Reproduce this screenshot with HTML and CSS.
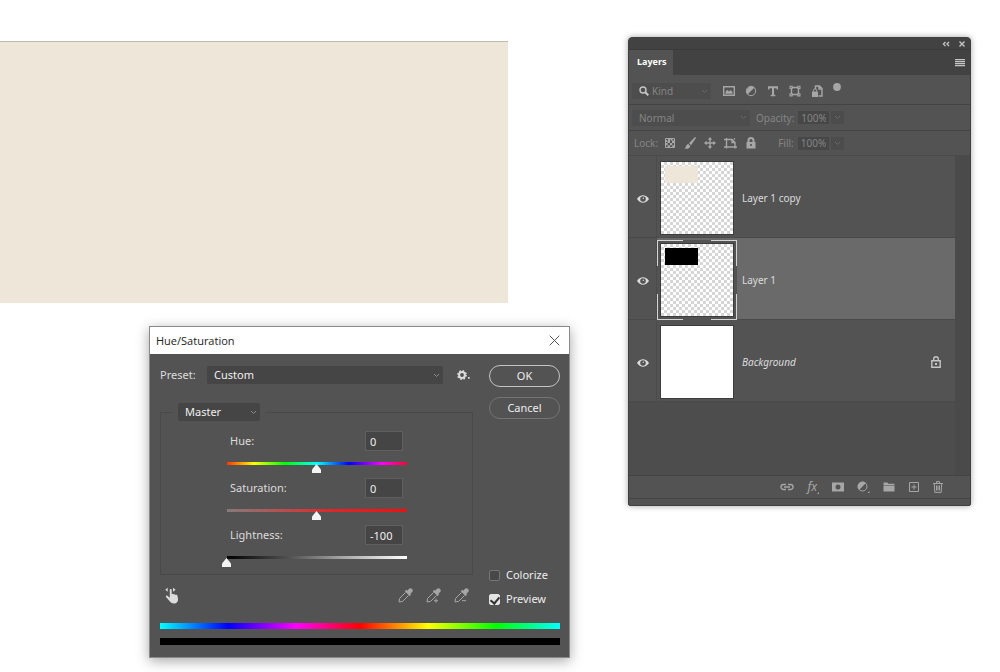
FILE: index.html
```html
<!DOCTYPE html>
<html lang="en">
<head>
<meta charset="utf-8">
<title>Hue/Saturation</title>
<link rel="stylesheet" href="styles.css">
</head>
<body>
<main class="desktop">
  <div class="canvas"></div>

  <section class="window layers" aria-label="Layers">
    <header class="panel-top">
      <button class="icon-btn" aria-label="Collapse"><svg width="8" height="6" viewBox="0 0 8 6"><path class="line light bold" d="M3.500 1l-2 2 2 2M7 1L5 3l2 2"/></svg></button>
      <button class="icon-btn" aria-label="Close panel"><svg width="8" height="8" viewBox="0 0 8 8"><path class="line light bold" d="M1.500 1.500l5 5M6.500 1.500l-5 5"/></svg></button>
    </header>
    <nav class="tabs">
      <button class="tab">Layers</button>
      <button class="icon-btn" aria-label="Panel menu"><svg width="10" height="8" viewBox="0 0 10 8"><path class="fill light" d="M0 0h10v1.300H0zM0 2h10v1.300H0zM0 4h10v1.300H0zM0 6h10v1.300H0z"/></svg></button>
    </nav>

    <div class="row filter">
      <label class="pick kind">
        <svg class="glass" width="10" height="10" viewBox="0 0 10 10"><circle class="line light bold" cx="4" cy="4" r="3"/><path class="line light thick" d="M6 6l3.300 3.300"/></svg>
        <select aria-label="Filter kind"><option>Kind</option></select>
        <svg class="chev" width="7" height="5" viewBox="0 0 7 5"><path class="line" d="M1 1l2.500 2.500L6 1"/></svg>
      </label>
      <div class="filter-icons">
        <button class="icon-btn" aria-label="Pixel layers"><svg width="12" height="12" viewBox="0 0 12 12"><path class="line bold" d="M.7 1.700h10.600v8.600H.7z"/><path class="fill" d="M2.500 8.800V7l1.800-2.300L6 6.500 7.500 5l2 2v1.800z"/></svg></button>
        <button class="icon-btn" aria-label="Adjustment layers"><svg width="12" height="12" viewBox="0 0 12 12"><circle class="line" cx="6" cy="6" r="4.700"/><path class="fill" d="M9.500 2.500A5 5 0 0 0 2.500 9.500z"/></svg></button>
        <button class="icon-btn" aria-label="Type layers"><svg width="12" height="12" viewBox="0 0 12 12"><path class="line thick" d="M1.500 2.200h9M6 2v8"/><path class="line bold" d="M1.700 1.500v3M10.300 1.500v3M3.700 10.500h4.600"/></svg></button>
        <button class="icon-btn" aria-label="Shape layers"><svg width="12" height="12" viewBox="0 0 12 12"><path class="line bold" d="M2.500 2.500h7v7h-7z"/><path class="fill" d="M.5.8h3.200V4H.5zM8.300.8h3.200V4H8.300zM.5 8.200h3.200v3.200H.5zM8.300 8.200h3.200v3.200H8.300z"/><path class="dark" d="M1.500 1.800h1v1h-1zM9.500 1.800h1v1h-1zM1.500 9.200h1v1h-1zM9.500 9.200h1v1h-1z"/></svg></button>
        <button class="icon-btn" aria-label="Smart objects"><svg width="12" height="12" viewBox="0 0 12 12"><path class="line bold" d="M4.500 4V1h4l2.500 2.500V11H7.500M8 1v3h3"/><path class="fill" d="M1 6.500h6V12H1z"/><path class="line" d="M2.500 6.500V5.300a1.500 1.500 0 0 1 3 0v1.200"/></svg></button>
        <button class="icon-btn" aria-label="Toggle filter"><svg width="8" height="16" viewBox="0 0 8 16"><circle class="fill" cx="4" cy="4" r="3.900"/></svg></button>
      </div>
    </div>

    <div class="row blend">
      <label class="pick mode">
        <select aria-label="Blend mode"><option>Normal</option></select>
        <svg class="chev" width="7" height="5" viewBox="0 0 7 5"><path class="line" d="M1 1l2.500 2.500L6 1"/></svg>
      </label>
      <label class="dim" for="opacity">Opacity:</label>
      <input class="pct" id="opacity" type="text" value="100%">
      <button class="drop" aria-label="Opacity slider"><svg width="7" height="5" viewBox="0 0 7 5"><path class="line" d="M1 1l2.500 2.500L6 1"/></svg></button>
    </div>

    <div class="row lock">
      <span class="dim">Lock:</span>
      <div class="lock-icons">
        <button class="icon-btn" aria-label="Lock transparent pixels"><svg width="12" height="12" viewBox="0 0 12 12"><path class="line" d="M1.500 1.500h9v9h-9z"/><path class="fill" d="M4 1h2v2.500H4zM8 3.500h2.500V6H8zM3.500 3.500H6V6H3.500zM6 6h2.300v2.300H6zM1.500 6h2.200v2.300H1.500zM3.700 8.300H6v2.200H3.700zM8.300 8.300h2.200v2.200H8.300zM6.500 1.500h2v2h-2zM1 3h2v2H1z"/></svg></button>
        <button class="icon-btn" aria-label="Lock image pixels"><svg width="12" height="12" viewBox="0 0 12 12"><path class="fill" d="M11.600.2c.5.4.3.900 0 1.300L7 8.200 5 6.300 10.500.6c.4-.4.700-.7 1.100-.4zM4.300 6.900l2 2c-.2 2.200-2.400 3.300-6 2.700C2 10.800 1.800 7.500 4.300 6.900z"/></svg></button>
        <button class="icon-btn" aria-label="Lock position"><svg width="12" height="12" viewBox="0 0 12 12"><path class="line bold" d="M6 1v10M1 6h10"/><path class="fill" d="M6 0l2.200 2.700H3.800zM6 12l2.200-2.700H3.800zM0 6l2.700-2.200v4.400zM12 6L9.300 3.800v4.400z"/></svg></button>
        <button class="icon-btn" aria-label="Lock artboard nesting"><svg width="13" height="12" viewBox="0 0 13 12"><path class="line bold" d="M2.500 1v10.500M0 2.500h8l3 3v6M0 10h13M8 2.500v3h3M10 1.500l1 1"/></svg></button>
        <button class="icon-btn" aria-label="Lock all"><svg width="12" height="12" viewBox="0 0 12 12"><path class="fill" d="M1.500 5h9v6.500h-9z"/><path class="line thick" d="M3.500 5V3.500a2.500 2.500 0 0 1 5 0V5"/><path class="dark" d="M5.200 7h1.600v2H5.200z"/></svg></button>
      </div>
      <label class="dim" for="fill">Fill:</label>
      <input class="pct" id="fill" type="text" value="100%">
      <button class="drop" aria-label="Fill slider"><svg width="7" height="5" viewBox="0 0 7 5"><path class="line" d="M1 1l2.500 2.500L6 1"/></svg></button>
    </div>

    <div class="list-area">
      <ul class="list">
        <li class="layer">
          <button class="eye" aria-label="Hide Layer 1 copy"><svg width="12" height="8" viewBox="0 0 12 8"><path class="pale" fill-rule="evenodd" d="M0 4C3-.9 9-.9 12 4 9 8.900 3 8.900 0 4zM6 1.200a2.800 2.800 0 1 0 0 5.600 2.800 2.800 0 0 0 0-5.600z"/><circle class="pale" cx="6.300" cy="3.200" r=".7"/></svg></button>
          <div class="body"><div class="frame"><div class="thumb checker"><i class="patch cream"></i></div></div><span class="name">Layer 1 copy</span></div>
        </li>
        <li class="layer selected">
          <button class="eye" aria-label="Hide Layer 1"><svg width="12" height="8" viewBox="0 0 12 8"><path class="pale" fill-rule="evenodd" d="M0 4C3-.9 9-.9 12 4 9 8.900 3 8.900 0 4zM6 1.200a2.800 2.800 0 1 0 0 5.600 2.800 2.800 0 0 0 0-5.600z"/><circle class="pale" cx="6.300" cy="3.200" r=".7"/></svg></button>
          <div class="body"><div class="frame"><div class="thumb checker"><i class="patch black"></i></div></div><span class="name">Layer 1</span></div>
        </li>
        <li class="layer">
          <button class="eye" aria-label="Hide Background"><svg width="12" height="8" viewBox="0 0 12 8"><path class="pale" fill-rule="evenodd" d="M0 4C3-.9 9-.9 12 4 9 8.900 3 8.900 0 4zM6 1.200a2.800 2.800 0 1 0 0 5.600 2.800 2.800 0 0 0 0-5.600z"/><circle class="pale" cx="6.300" cy="3.200" r=".7"/></svg></button>
          <div class="body"><div class="frame"><div class="thumb"></div></div><em class="name">Background</em>
            <svg class="locked" width="10" height="12" viewBox="0 0 10 12"><path class="line light bold" d="M.8 4.700h8.400v6.500H.8zM2.700 4.500V3a2.300 2.300 0 0 1 4.600 0v1.500"/><path class="fill light" d="M4 7h2v2H4z"/></svg>
          </div>
        </li>
      </ul>
      <div class="scroll"></div>
    </div>

    <footer class="actions">
      <button class="icon-btn" aria-label="Link layers"><svg width="14" height="8" viewBox="0 0 14 8"><path class="line bold" d="M6 1.500H3.500a2.500 2.500 0 0 0 0 5H6M8 1.500h2.500a2.500 2.500 0 0 1 0 5H8M4 4h6"/></svg></button>
      <button class="icon-btn fx" aria-label="Layer style">fx<svg width="2" height="2" viewBox="0 0 2 2"><path class="fill" d="M2 0v2H0z"/></svg></button>
      <button class="icon-btn" aria-label="Add mask"><svg width="12" height="10" viewBox="0 0 12 10"><path class="fill" fill-rule="evenodd" d="M0 .5h12v9H0zM6 2.500a2.500 2.500 0 1 0 0 5 2.500 2.500 0 0 0 0-5z"/></svg></button>
      <button class="icon-btn" aria-label="New adjustment layer"><svg width="13" height="12" viewBox="0 0 13 12"><circle class="line" cx="5.500" cy="5.500" r="4.500"/><path class="fill" d="M8.900 2.100A4.800 4.800 0 0 0 2.100 8.900zM12.500 10v2h-2z"/></svg></button>
      <button class="icon-btn" aria-label="New group"><svg width="12" height="10" viewBox="0 0 12 10"><path class="fill" d="M.5.5h4l1 1.300h6V3H.5zM.5 3.500h11v6H.5z"/></svg></button>
      <button class="icon-btn" aria-label="New layer"><svg width="12" height="12" viewBox="0 0 12 12"><path class="line" d="M1.500 1.500h9v9h-9zM6 3.500v5M3.500 6h5"/></svg></button>
      <button class="icon-btn" aria-label="Delete layer"><svg width="10" height="12" viewBox="0 0 10 12"><path class="line" d="M0 2.500h10M3.500 2V.6h3V2M1.300 2.500l.5 8.900h6.400l.5-8.900M3.500 4.500v5M5 4.500v5M6.500 4.500v5"/></svg></button>
    </footer>
    <div class="grip"></div>
  </section>

  <section class="window dialog" role="dialog" aria-labelledby="dlg-title">
    <header class="title-bar">
      <h1 id="dlg-title">Hue/Saturation</h1>
      <button class="icon-btn" aria-label="Close"><svg width="11" height="11" viewBox="0 0 11 11"><path class="cross" d="M.7.7l9.600 9.600M10.300.7L.7 10.300"/></svg></button>
    </header>
    <div class="dialog-body">
      <div class="columns">
        <div class="left">
          <div class="preset">
            <label for="preset">Preset:</label>
            <div class="pick bright grow">
              <select id="preset"><option>Custom</option></select>
              <svg class="chev" width="7" height="5" viewBox="0 0 7 5"><path class="line" d="M1 1l2.500 2.500L6 1"/></svg>
            </div>
            <button class="icon-btn gear" aria-label="Preset options"><svg width="14" height="12" viewBox="0 0 14 12"><circle class="gear-ring" cx="5" cy="6" r="2.900"/><circle class="gear-teeth" cx="5" cy="6" r="4.200"/><path class="pale" d="M11 8h1.700v1.700H11z"/></svg></button>
          </div>
          <fieldset class="box">
            <legend>
              <span class="pick bright">
                <select aria-label="Range"><option>Master</option></select>
                <svg class="chev" width="7" height="5" viewBox="0 0 7 5"><path class="line" d="M1 1l2.500 2.500L6 1"/></svg>
              </span>
            </legend>
            <div class="control">
              <div class="control-head"><label for="hue">Hue:</label><input class="num" id="hue" type="text" value="0"></div>
              <input class="slider hue" type="range" min="-180" max="180" value="0" aria-label="Hue">
            </div>
            <div class="control">
              <div class="control-head"><label for="sat">Saturation:</label><input class="num" id="sat" type="text" value="0"></div>
              <input class="slider sat" type="range" min="-100" max="100" value="0" aria-label="Saturation">
            </div>
            <div class="control">
              <div class="control-head"><label for="light">Lightness:</label><input class="num" id="light" type="text" value="-100"></div>
              <input class="slider lum" type="range" min="-100" max="100" value="-100" aria-label="Lightness">
            </div>
          </fieldset>
          <div class="tools">
            <button class="icon-btn" aria-label="On-image adjustment"><svg width="14" height="17" viewBox="0 0 14 17"><path class="pale" d="M4.800 3c0-1.300 1.900-1.300 1.900 0v4.300l.6-.3c.6-.3 1.300-.1 1.500.4.600-.4 1.500-.1 1.700.5.900-.3 1.800.2 2 1l.5 2.800c.3 2.800-1.400 4.800-4 4.800-2.300 0-3.400-.9-4.500-2.500L1 9.900c-.5-1 .8-1.800 1.600-1l2.200 1.900zM2.700.8v4L.2 2.800zM8 .8l2.600 2L8 4.800z"/></svg></button>
            <div class="droppers">
              <button class="icon-btn" aria-label="Eyedropper"><svg width="15" height="15" viewBox="0 0 15 15"><path class="fill" d="M14 1c1 1 1 2.200 0 3.200l-1.700 1.600.8.900-1.500 1.400-4.800-4.800 1.400-1.500.9.900L10.800 1c1-1 2.300-.9 3.200 0z"/><path class="line" d="M7.500 4.500L1.600 10.400 1 14l3.600-.6 5.900-5.900"/></svg></button>
              <button class="icon-btn" aria-label="Add to sample"><svg width="15" height="15" viewBox="0 0 15 15"><path class="fill" d="M14 1c1 1 1 2.200 0 3.200l-1.700 1.600.8.900-1.500 1.400-4.800-4.800 1.400-1.500.9.900L10.800 1c1-1 2.300-.9 3.200 0z"/><path class="line" d="M7.500 4.500L1.600 10.400 1 14l3.600-.6 5.900-5.900M10 10.700v4M8 12.700h4"/></svg></button>
              <button class="icon-btn" aria-label="Subtract from sample"><svg width="15" height="15" viewBox="0 0 15 15"><path class="fill" d="M14 1c1 1 1 2.200 0 3.200l-1.700 1.600.8.900-1.500 1.400-4.800-4.800 1.400-1.500.9.900L10.800 1c1-1 2.300-.9 3.200 0z"/><path class="line" d="M7.500 4.500L1.600 10.400 1 14l3.600-.6 5.900-5.900M8 12.700h4"/></svg></button>
            </div>
          </div>
        </div>
        <div class="right">
          <button class="pill primary">OK</button>
          <button class="pill">Cancel</button>
          <div class="checks">
            <label class="check"><input type="checkbox">Colorize</label>
            <label class="check"><input type="checkbox" checked>Preview</label>
          </div>
        </div>
      </div>
      <div class="spectrum"></div>
      <div class="result"></div>
    </div>
  </section>
</main>
</body>
</html>
```
FILE: styles.css
```css
* { box-sizing: border-box; }
body { margin: 0; background: #fff; font: 10px/14px "Noto Sans", "Open Sans", sans-serif; color: #dcdcdc; }
button, input, select { font: inherit; color: inherit; margin: 0; }
svg { display: block; flex: none; }

.desktop { position: relative; min-height: 100vh; overflow: hidden; padding-top: 41px; }
.canvas { width: 50.8%; height: 262px; background: #eee6d9; border-top: 1px solid #bdb9b4; }
.window { position: absolute; display: flex; flex-direction: column; }

.line { fill: none; stroke: #a6a6a6; stroke-width: 1; }
.bold { stroke-width: 1.400; }
.thick { stroke-width: 2; }
.fill { fill: #a6a6a6; }
.line.light { stroke: #c4c4c4; }
.fill.light { fill: #c4c4c4; }
.dark { fill: #535353; }
.pale { fill: #dcdcdc; }
.icon-btn { display: flex; align-items: center; justify-content: center; padding: 0; border: 0; background: none; }

.pick { display: grid; align-items: center; background: #4d4d4d; }
.pick > * { grid-row: 1; grid-column: 1; }
.pick select { appearance: none; width: 100%; height: 18px; padding: 0 7px; border: 0; border-radius: 0; background: none; }
.pick .chev { justify-self: end; margin-right: 3px; }
.chev .line, .drop .line { stroke: #686868; }
.pick.bright { background: #454545; border-radius: 2px; color: #f0f0f0; }
.pick.bright .chev .line { stroke: #8c8c8c; }

/* Layers panel */
.layers { left: 62.8%; top: 37px; width: 34.3%; background: #535353; border: 1px solid #404040; border-radius: 4px 4px 2px 2px; box-shadow: 0 0 6px rgba(0, 0, 0, .35); }
.panel-top { display: flex; align-items: center; justify-content: flex-end; gap: 8px; height: 12px; padding: 0 4px; background: #424242; border-bottom: 1px solid #3a3a3a; border-radius: 3px 3px 0 0; }
.tabs { display: flex; justify-content: space-between; height: 25px; padding-right: 5px; background: #424242; }
.tab { padding: 0 7px 2px 8px; border: 0; background: #535353; color: #fff; font-weight: 700; font-size: 9px; }
.row { display: flex; align-items: center; height: 26px; padding-left: 3px; border-bottom: 1px solid #434343; color: #858585; }
.row.filter { height: 30px; padding-top: 3px; }
.kind { width: 79px; height: 16px; }
.kind .glass { margin-left: 7px; }
.kind select { padding-left: 20px; height: 16px; }
.mode { width: 118px; height: 16px; }
.mode select { height: 16px; }
.filter-icons { display: flex; align-items: center; gap: 10px; margin-left: 12px; }
.blend .dim { margin-left: 6px; }
.pct { width: 31px; height: 13px; padding: 0 3px; margin-left: 4px; border: 0; background: #474747; }
.drop { display: grid; place-items: center; width: 13px; height: 13px; padding: 0; margin-left: 2px; border: 0; background: #4c4c4c; }
.lock .dim { margin-left: 2px; }
.lock-icons { display: flex; align-items: center; gap: 8px; margin-left: 6px; }
.row.lock > label { margin-left: 21px; }
.row.lock { height: 25px; border-bottom-color: #4a4a4a; }

.list-area { display: flex; height: 320px; border-bottom: 1px solid #434343; background: #4d4d4d; }
.list { flex: 1; margin: 0; padding: 0; list-style: none; }
.scroll { width: 15px; background: #4a4a4a; }
.layer { display: flex; height: 82px; border-bottom: 1px solid #4a4a4a; background: #535353; }
.eye { display: grid; place-items: center; width: 28px; padding: 4px 0 0; border: 0; border-right: 1px solid #4b4b4b; background: none; }
.body { flex: 1; display: flex; align-items: center; padding: 3px 14px 0 0; }
.selected .body { background: #6a6a6a; }
.frame { padding: 2px; border: 1px solid transparent; }
.selected .frame { border: 0; padding: 3px; background:
  linear-gradient(#d4d4d4, #d4d4d4) 0 0 / 26px 1px, linear-gradient(#d4d4d4, #d4d4d4) 100% 0 / 26px 1px,
  linear-gradient(#d4d4d4, #d4d4d4) 0 100% / 26px 1px, linear-gradient(#d4d4d4, #d4d4d4) 100% 100% / 26px 1px,
  linear-gradient(#d4d4d4, #d4d4d4) 0 0 / 1px 26px, linear-gradient(#d4d4d4, #d4d4d4) 100% 0 / 1px 26px,
  linear-gradient(#d4d4d4, #d4d4d4) 0 100% / 1px 26px, linear-gradient(#d4d4d4, #d4d4d4) 100% 100% / 1px 26px,
  #535353;
  background-repeat: no-repeat; }
.thumb { width: 74px; height: 74px; padding: 4px; border: 1px solid #3c3c3c; background-color: #fff; }
.checker { background: conic-gradient(#d6d6d6 25%, #fff 0 50%, #d6d6d6 0 75%, #fff 0) 0 0 / 6px 6px; }
.patch { display: block; width: 33px; height: 17px; }
.cream { background: #eee6d9; }
.black { background: #000; }
.name { flex: 1; margin-left: 5px; }
.actions { display: flex; align-items: center; justify-content: flex-end; gap: 13px; height: 23px; padding-right: 27px; border-bottom: 1px solid #434343; }
.fx { align-items: flex-end; font-style: italic; font-size: 12px; color: #a6a6a6; }
.grip { height: 6px; }

/* Hue/Saturation dialog */
.dialog { left: 14.9%; top: 326px; width: 42.1%; font-size: 11px; background: #535353; border: 1px solid #8a8a8a; box-shadow: 0 3px 12px rgba(0, 0, 0, .35); }
.title-bar { display: flex; align-items: center; justify-content: space-between; height: 27px; padding: 0 9px 0 6px; background: #fff; color: #222; }
.title-bar h1 { margin: 0; font: 400 11px/14px "Open Sans", sans-serif; }
.cross { fill: none; stroke: #555; stroke-width: 1; }
.dialog-body { padding: 11px 9px 12px 10px; }
.columns { display: flex; gap: 16px; }
.left { flex: 1; display: flex; flex-direction: column; }
.right { width: 71px; display: flex; flex-direction: column; gap: 10px; }
.preset { display: flex; align-items: center; height: 20px; }
.preset label { width: 47px; }
.grow { flex: 1; }
.gear { margin-left: 14px; margin-right: 2px; }
.gear-ring { fill: none; stroke: #dcdcdc; stroke-width: 2; }
.gear-teeth { fill: none; stroke: #dcdcdc; stroke-width: 1.500; stroke-dasharray: 1.650 1.650; }
.box { min-width: 0; margin: 18px 0 0; padding: 10px 61px 2px; border: 1px solid #494949; }
.box legend { margin-left: -50px; padding: 0 6px; }
.box .pick { width: 82px; }
.control { height: 47px; }
.control-head { display: flex; align-items: center; justify-content: space-between; padding: 0 8px; }
.num { width: 38px; height: 20px; padding: 0 4px; border: 1px solid #5f5f5f; background: #454545; color: #f0f0f0; }
.slider { appearance: none; display: block; width: 100%; height: 13px; margin: 11px 0 0; background: none; background-repeat: no-repeat; background-size: calc(100% - 9px) 3px; background-position: 5px 0; }
.slider::-webkit-slider-runnable-track { height: 13px; }
.slider::-webkit-slider-thumb { appearance: none; width: 9px; height: 9px; margin-top: 2px; border: 0; background: #f4f4f4; clip-path: polygon(50% 0, 100% 60%, 100% 100%, 0 100%, 0 60%); }
.hue { background-image: linear-gradient(90deg, #f30, #ff0 15%, #0f0 32%, #0ff 50%, #00f 68%, #f0f 86%, #f03); }
.sat { background-image: linear-gradient(90deg, #857a7a, #c04848 35%, #e02525 60%, #f01010); }
.lum { background-image: linear-gradient(90deg, #000, #535353 35%, #a8a8a8 65%, #fff); }
.tools { display: flex; align-items: center; justify-content: space-between; height: 21px; margin-top: 10px; padding: 0 4px 0 5px; }
.droppers { display: flex; gap: 13px; }
.pill { height: 22px; padding: 0; border: 1px solid #747474; border-radius: 11px; background: none; color: #eee; }
.pill.primary { border-color: #c4c4c4; }
.checks { display: flex; flex-direction: column; gap: 10px; margin-top: auto; }
.check { display: flex; align-items: center; gap: 6px; color: #eee; }
.check input { appearance: none; display: grid; place-items: center; width: 11px; height: 11px; border: 1px solid #757575; border-radius: 2px; background: #484848; }
.check input:checked { background: #e4e4e4; border-color: #e4e4e4; }
.check input:checked::before { content: ""; width: 4px; height: 7px; margin-bottom: 2px; border: solid #333; border-width: 0 2px 2px 0; transform: rotate(40deg); }
.spectrum { height: 6px; margin-top: 17px; background: linear-gradient(90deg, #0ff, #00f 17%, #f0f 34%, #f00 50%, #ff0 67%, #0f0 84%, #0ff); }
.result { height: 7px; margin-top: 9px; background: #000; }
```
